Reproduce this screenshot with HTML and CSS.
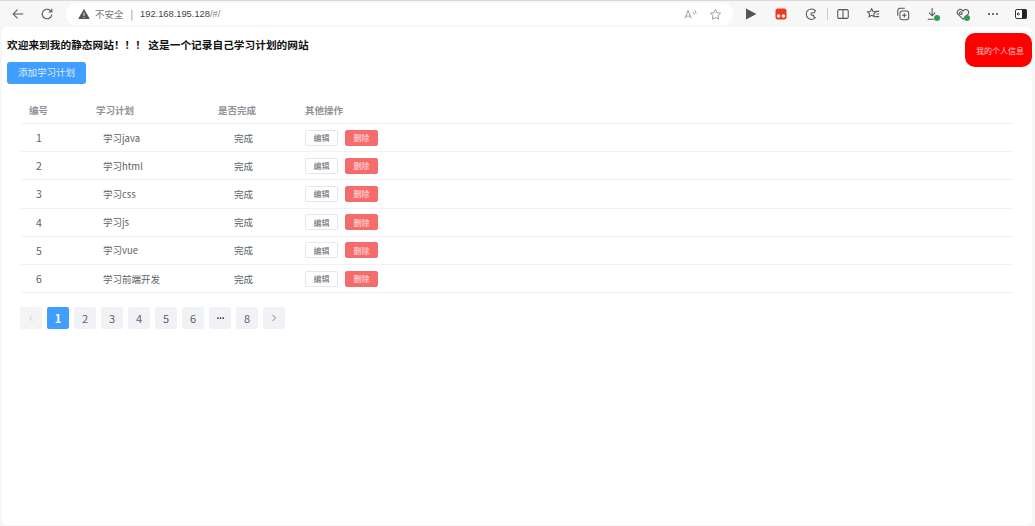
FILE: index.html
```html
<!DOCTYPE html>
<html lang="zh-CN">

<head>
  <meta charset="UTF-8" />
  <title>学习计划</title>
  <link rel="stylesheet" href="styles.css">
</head>

<body>
  <!-- Browser toolbar -->
  <div class="toolbar">
    <svg class="tool-icon back" viewBox="0 0 16 16"><path d="M14 8H2.500M7.500 3 2.500 8l5 5" /></svg>
    <svg class="tool-icon reload" viewBox="0 0 16 16"><path d="M13.500 8.500A5.500 5.500 0 1 1 11.800 4L13.500 5.700M13.500 2v3.700H9.800" /></svg>
    <div class="address">
      <svg class="warn" viewBox="0 0 12 12"><path d="M6 .8 11.800 11H.2Z" /><path d="M6 4.500v3.500M6 9v1" stroke="#fff" stroke-width=".9" /></svg>
      <span class="insecure">不安全</span>
      <span class="divider">|</span>
      <span class="url">192.168.195.128<i>/#/</i></span>
      <span class="address-end">
        <svg class="tool-icon small" viewBox="0 0 16 16"><path d="M1 13 5 3l4 10M2.500 10h5M11 5l2 3M13.500 3l1.500 4" /></svg>
        <svg class="tool-icon small" viewBox="0 0 16 16"><path d="m8 1.800 1.900 4 4.400.5-3.200 3 .8 4.400L8 11.600l-3.900 2.100.8-4.400-3.200-3 4.400-.5Z" /></svg>
      </span>
    </div>
    <div class="tools">
      <svg class="ext play" viewBox="0 0 12 12"><path d="M1 0.500 11.500 6 1 11.500Z" /></svg>
      <svg class="ext" viewBox="0 0 12 12"><rect x="0.500" y="0.500" width="11" height="11" rx="2.500" fill="#f0391f" /><circle cx="3.600" cy="8" r="1.700" fill="#fff" /><circle cx="8.400" cy="8" r="1.700" fill="#fff" /></svg>
      <svg class="tool-icon" viewBox="0 0 16 16"><path d="M13 4.200A6 6 0 1 0 13 12.300L11 11V9.500H9.500a1.500 1.500 0 0 1 0-3h2.300Z" /></svg>
      <span class="sep"></span>
      <svg class="tool-icon" viewBox="0 0 16 16"><path d="M8 3H3.500A1.500 1.500 0 0 0 2 4.500v7A1.500 1.500 0 0 0 3.500 13H8Zm0 0h4.500A1.500 1.500 0 0 1 14 4.500v7a1.500 1.500 0 0 1-1.500 1.500H8" /></svg>
      <svg class="tool-icon" viewBox="0 0 16 16"><path d="m6.500 2 1.500 3.200 3.300.4-2.400 2.300.6 3.300-3-1.600-3 1.600.6-3.300L1.700 5.600 5 5.200ZM11 5h4M12 8h3M10.500 11H15" /></svg>
      <svg class="tool-icon" viewBox="0 0 16 16"><rect x="4.500" y="4.500" width="10" height="10" rx="2.500" /><path d="M9.500 7v5M7 9.500h5M2 10V4a2.500 2.500 0 0 1 2.500-2.500H10" /></svg>
      <span class="badged">
        <svg class="tool-icon" viewBox="0 0 16 16"><path d="M7 1v9M3.500 6.500 7 10l3.500-3.500M2 14h7" /></svg>
        <b class="check"></b>
      </span>
      <span class="badged">
        <svg class="tool-icon" viewBox="0 0 16 16"><path d="M8 14 2.500 8.500a3.300 3.300 0 0 1 4.700-4.700L8 4.600l.8-.8a3.300 3.300 0 0 1 4.700 4.700Z" /><circle cx="5.500" cy="7" r="1.500" /></svg>
        <b class="check"></b>
      </span>
      <svg class="more" viewBox="0 0 12 4"><circle cx="2" cy="2" r="1" /><circle cx="6" cy="2" r="1" /><circle cx="10" cy="2" r="1" /></svg>
      <svg class="ext sidebar-toggle" viewBox="0 0 12 12"><rect x="0.500" y="1.500" width="11" height="9" rx="1.500" fill="#fff" stroke="#333" /><rect x="7" y="1.500" width="4.500" height="9" fill="#222" /><path d="M2 6h3M3.500 4.500 2 6l1.500 1.500" fill="none" stroke="#333" /></svg>
    </div>
  </div>

  <!-- Page -->
  <div class="page">
    <div class="intro">
      <div>
        <h1>欢迎来到我的静态网站！！！ 这是一个记录自己学习计划的网站</h1>
        <button class="add-btn">添加学习计划</button>
      </div>
      <button class="info-btn">我的个人信息</button>
    </div>

    <div class="plan-table">
      <div class="row head">
        <span class="c-id">编号</span>
        <span class="c-name">学习计划</span>
        <span class="c-done">是否完成</span>
        <span>其他操作</span>
      </div>
      <div class="row">
        <span class="c-id">1</span>
        <span class="c-name">学习java</span>
        <span class="c-done">完成</span>
        <span class="ops"><button class="edit">编辑</button><button class="del">删除</button></span>
      </div>
      <div class="row">
        <span class="c-id">2</span>
        <span class="c-name">学习html</span>
        <span class="c-done">完成</span>
        <span class="ops"><button class="edit">编辑</button><button class="del">删除</button></span>
      </div>
      <div class="row">
        <span class="c-id">3</span>
        <span class="c-name">学习css</span>
        <span class="c-done">完成</span>
        <span class="ops"><button class="edit">编辑</button><button class="del">删除</button></span>
      </div>
      <div class="row">
        <span class="c-id">4</span>
        <span class="c-name">学习js</span>
        <span class="c-done">完成</span>
        <span class="ops"><button class="edit">编辑</button><button class="del">删除</button></span>
      </div>
      <div class="row">
        <span class="c-id">5</span>
        <span class="c-name">学习vue</span>
        <span class="c-done">完成</span>
        <span class="ops"><button class="edit">编辑</button><button class="del">删除</button></span>
      </div>
      <div class="row">
        <span class="c-id">6</span>
        <span class="c-name">学习前端开发</span>
        <span class="c-done">完成</span>
        <span class="ops"><button class="edit">编辑</button><button class="del">删除</button></span>
      </div>
    </div>

    <div class="pager">
      <span class="disabled"><svg class="chevron" viewBox="0 0 8 8"><path d="M5.500 1 2.500 4l3 3" /></svg></span>
      <span class="active">1</span>
      <span>2</span>
      <span>3</span>
      <span>4</span>
      <span>5</span>
      <span>6</span>
      <span><svg class="dots" viewBox="0 0 8 2"><circle cx="1" cy="1" r="1" /><circle cx="4" cy="1" r="1" /><circle cx="7" cy="1" r="1" /></svg></span>
      <span>8</span>
      <span><svg class="chevron" viewBox="0 0 8 8"><path d="M2.500 1l3 3-3 3" /></svg></span>
    </div>
  </div>
</body>

</html>
```

FILE: styles.css
```css
* {
  box-sizing: border-box;
  margin: 0;
  padding: 0;
}

body {
  font-family: "Noto Sans CJK SC", "Noto Sans", sans-serif;
  height: 526px;
  overflow: hidden;
  background-color: #f7f7f7;
  border-top: 1px solid #d8d8d8;
  color: #606266;
}

button {
  font-family: inherit;
  cursor: pointer;
}

/* Browser toolbar */
.toolbar {
  height: 26px;
  display: flex;
  align-items: center;
  padding-left: 11px;
}

.tool-icon {
  width: 14px;
  height: 14px;
  flex: none;
  fill: none;
  stroke: #555;
  stroke-width: 1.2;
}

.reload {
  margin-left: 15px;
}

.address {
  margin-left: 12px;
  width: 667px;
  height: 22px;
  flex: none;
  background-color: white;
  border-radius: 11px;
  display: flex;
  align-items: center;
  padding-left: 12px;
  font-size: 9.5px;
}

.warn {
  width: 12px;
  height: 12px;
  fill: #555;
}

.insecure {
  margin-left: 5px;
  color: #777;
}

.divider {
  margin-left: 7px;
  color: #777;
}

.url {
  margin-left: 7px;
  color: #444;
  font-family: "Liberation Sans", sans-serif;
  font-size: 9.3px;
}

.url i {
  font-style: normal;
  color: #888;
}

.address-end {
  margin-left: auto;
  margin-right: 11px;
  display: flex;
  gap: 12px;
}

.small {
  width: 13px;
  height: 13px;
  stroke: #888;
  stroke-width: 1;
}

.tools {
  display: flex;
  align-items: center;
  margin-left: 3px;
}

.tools .tool-icon,
.badged {
  margin: 0 8px;
}

.badged .tool-icon {
  margin: 0;
}

.ext {
  width: 12px;
  height: 12px;
  flex: none;
  margin: 0 9px;
}

.play {
  fill: #555;
}

.sep {
  width: 1px;
  height: 12px;
  background-color: #ccc;
  margin: 0 .5px;
}

.badged {
  position: relative;
  display: flex;
}

.check {
  position: absolute;
  right: 0;
  bottom: 0;
  width: 6px;
  height: 6px;
  border-radius: 50%;
  background-color: #2e9e4f;
}

.more {
  width: 12px;
  height: 4px;
  flex: none;
  margin: 0 9px;
  fill: #444;
}

.sidebar-toggle {
  margin-left: 7px;
}

/* Page */
.page {
  margin: 0 3px 0 2px;
  height: 498px;
  background-color: white;
  border-radius: 5px;
  padding-left: 5px;
}

.intro {
  display: flex;
  justify-content: space-between;
  align-items: flex-start;
}

h1 {
  font-size: 10.7px;
  line-height: 16px;
  font-weight: 700;
  color: #111;
  margin-top: 10px;
}

.add-btn {
  margin-top: 9px;
  width: 79px;
  height: 22px;
  border: none;
  border-radius: 3px;
  padding-bottom: 2px;
  background-color: #409eff;
  color: #dcecff;
  font-size: 9.5px;
}

.info-btn {
  margin-top: 6px;
  width: 67px;
  height: 34px;
  border: none;
  border-radius: 10px;
  padding-left: 3px;
  background-color: #f00;
  color: #ffc9c9;
  font-size: 8px;
}

/* Table */
.plan-table {
  margin: 12px 19px 0 13px;
}

.row {
  height: 28.2px;
  display: flex;
  align-items: center;
  border-bottom: 1px solid #f0f2f7;
  font-size: 9.5px;
}

.head {
  height: 28px;
  font-weight: 700;
  color: #909399;
}

.row > span:nth-child(1) {
  width: 76px;
}

.row > span:nth-child(2) {
  width: 122px;
}

.row > span:nth-child(3) {
  width: 87px;
}

.head .c-id {
  padding-left: 9px;
}

.row:not(.head) .c-id {
  padding-left: 16px;
  font-size: 10.5px;
}

.row:not(.head) .c-name {
  padding-left: 7px;
}

.row:not(.head) .c-done {
  padding-left: 16px;
}

.ops {
  display: flex;
  gap: 7px;
}

.ops button {
  width: 33px;
  height: 16px;
  border-radius: 2px;
  font-size: 8px;
}

.edit {
  background-color: white;
  border: 1px solid #e4e7ed;
  color: #606266;
}

.del {
  background-color: #f56c6c;
  border: 1px solid #f56c6c;
  color: #fde2e2;
}

/* Pager */
.pager {
  margin: 14px 0 0 13px;
  display: flex;
  gap: 5px;
}

.pager span {
  width: 22px;
  height: 22px;
  display: flex;
  align-items: center;
  justify-content: center;
  background-color: #f0f2f5;
  border-radius: 2px;
  font-size: 11px;
  color: #606266;
}

.pager .active {
  background-color: #409eff;
  color: white;
  font-weight: 700;
}

.chevron {
  width: 8px;
  height: 8px;
  fill: none;
  stroke: #777;
  stroke-width: 0.9;
}

.pager .disabled {
  background-color: #f4f4f5;
}

.disabled .chevron {
  stroke: #c0c4cc;
}

.dots {
  width: 7px;
  height: 2px;
  fill: #303133;
}
```
